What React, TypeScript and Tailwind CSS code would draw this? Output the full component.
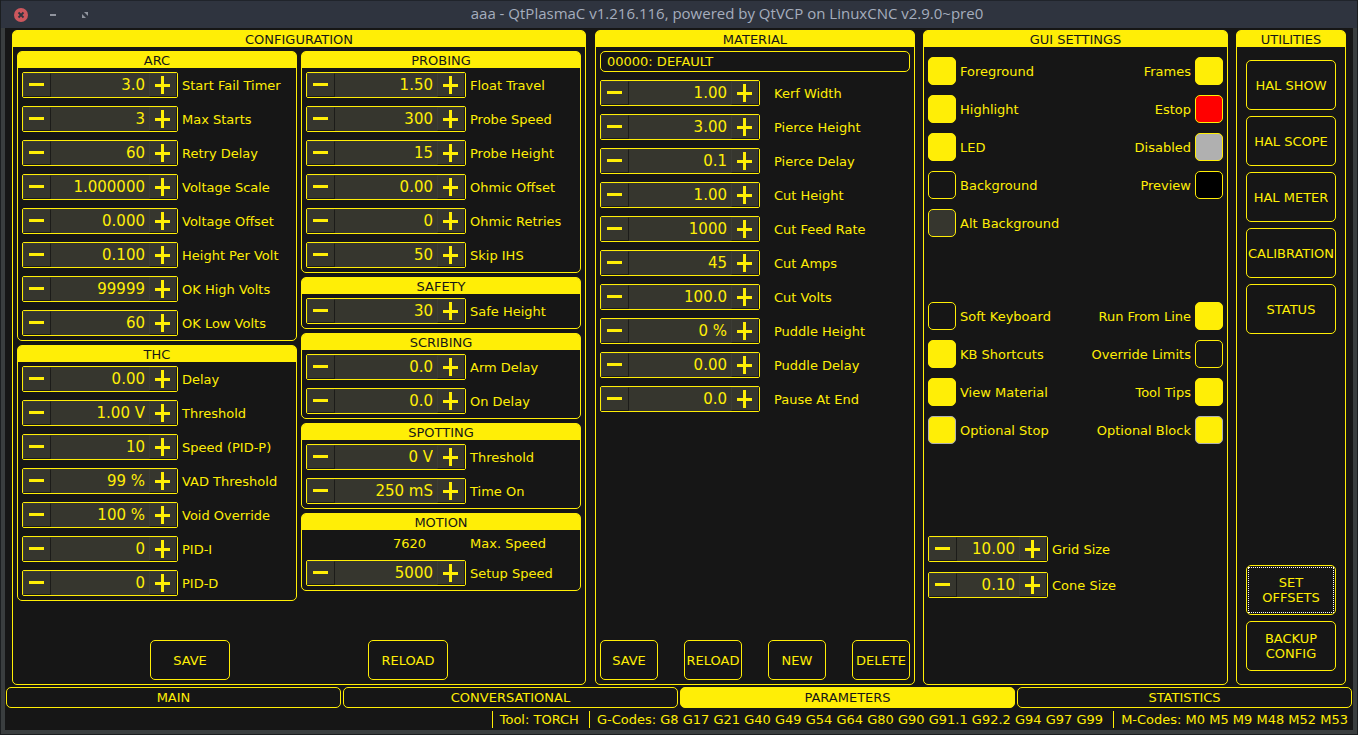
import React, { useId, useState } from "react";

type Field = [label: string, value: string];

const arc: Field[] = [
  ["Start Fail Timer", "3.0"],
  ["Max Starts", "3"],
  ["Retry Delay", "60"],
  ["Voltage Scale", "1.000000"],
  ["Voltage Offset", "0.000"],
  ["Height Per Volt", "0.100"],
  ["OK High Volts", "99999"],
  ["OK Low Volts", "60"],
];
const thc: Field[] = [
  ["Delay", "0.00"],
  ["Threshold", "1.00 V"],
  ["Speed (PID-P)", "10"],
  ["VAD Threshold", "99 %"],
  ["Void Override", "100 %"],
  ["PID-I", "0"],
  ["PID-D", "0"],
];
const probing: Field[] = [
  ["Float Travel", "1.50"],
  ["Probe Speed", "300"],
  ["Probe Height", "15"],
  ["Ohmic Offset", "0.00"],
  ["Ohmic Retries", "0"],
  ["Skip IHS", "50"],
];
const safety: Field[] = [["Safe Height", "30"]];
const scribing: Field[] = [
  ["Arm Delay", "0.0"],
  ["On Delay", "0.0"],
];
const spotting: Field[] = [
  ["Threshold", "0 V"],
  ["Time On", "250 mS"],
];
const material: Field[] = [
  ["Kerf Width", "1.00"],
  ["Pierce Height", "3.00"],
  ["Pierce Delay", "0.1"],
  ["Cut Height", "1.00"],
  ["Cut Feed Rate", "1000"],
  ["Cut Amps", "45"],
  ["Cut Volts", "100.0"],
  ["Puddle Height", "0 %"],
  ["Puddle Delay", "0.00"],
  ["Pause At End", "0.0"],
];

function step(text: string, direction: number) {
  const match = text.match(/^(-?\d+)(?:\.(\d+))?(.*)$/);
  if (!match) return text;
  const places = match[2]?.length ?? 0;
  const next = Math.max(0, parseFloat(text) + direction * Math.pow(10, -places));
  return next.toFixed(places) + match[3];
}

function Spin({
  label,
  value: initial,
  width = "w-40",
  gap = "gap-1",
}: {
  label: string;
  value: string;
  width?: string;
  gap?: string;
}) {
  const id = useId();
  const [value, setValue] = useState(initial);
  const button =
    "flex shrink-0 items-center border border-[#3c3c35] border-r-[#1c1c19] border-b-[#1c1c19] bg-[#36362e]";
  return (
    <div className={`flex items-center ${gap}`}>
      <div className={`flex h-[26px] shrink-0 rounded-xs border border-[#ffee06] bg-[#36362e] ${width}`}>
        <button
          type="button"
          aria-label={`Decrease ${label}`}
          onClick={() => setValue(step(value, -1))}
          className={`${button} w-7 pl-[5px]`}
        >
          <svg width="15" height="18" viewBox="0 0 15 18" fill="#ffee06" shapeRendering="crispEdges">
            <rect x="0" y="7" width="15" height="3" />
          </svg>
        </button>
        <input
          id={id}
          value={value}
          onChange={(e) => setValue(e.target.value)}
          className="h-6 w-0 min-w-0 grow bg-transparent pr-1 text-right text-[15px] outline-none"
        />
        <button
          type="button"
          aria-label={`Increase ${label}`}
          onClick={() => setValue(step(value, 1))}
          className={`${button} w-7 pl-[5px]`}
        >
          <svg width="15" height="18" viewBox="0 0 15 18" fill="#ffee06" shapeRendering="crispEdges">
            <rect x="0" y="8" width="15" height="3" />
            <rect x="6" y="0" width="3" height="18" />
          </svg>
        </button>
      </div>
      <label htmlFor={id} className="whitespace-nowrap">
        {label}
      </label>
    </div>
  );
}

function Panel({ title, children, className = "" }: { title: string; children: React.ReactNode; className?: string }) {
  return (
    <section className={`flex flex-col rounded-[5px] border border-[#ffee06] ${className}`}>
      <h2 className="h-4 shrink-0 rounded-t-[3px] bg-[#ffee06] text-center leading-[18px] text-[#161616]">{title}</h2>
      {children}
    </section>
  );
}

function Group({
  title,
  fields,
  width,
  children,
}: {
  title: string;
  fields: Field[];
  width?: string;
  children?: React.ReactNode;
}) {
  return (
    <Panel title={title}>
      <div className="flex flex-col gap-2 p-1">
        {children}
        {fields.map(([label, value]) => (
          <Spin key={label} label={label} value={value} width={width} />
        ))}
      </div>
    </Panel>
  );
}

function Button({ children, className }: { children: React.ReactNode; className: string }) {
  return (
    <button
      type="button"
      className={`flex items-center justify-center rounded-[5px] border border-[#ffee06] text-center whitespace-nowrap ${className}`}
    >
      {children}
    </button>
  );
}

function Swatch({ label, color, right = false }: { label: string; color: string; right?: boolean }) {
  const id = useId();
  return (
    <div className={`flex items-center gap-1 ${right ? "flex-row-reverse" : ""}`}>
      <button id={id} type="button" className={`size-7 rounded-[5px] border border-[#ffee06] ${color}`} />
      <label htmlFor={id}>{label}</label>
    </div>
  );
}

function Check({
  label,
  checked = false,
  right = false,
  border = "border-[#ffee06]",
}: {
  label: string;
  checked?: boolean;
  right?: boolean;
  border?: string;
}) {
  const id = useId();
  return (
    <div className={`flex items-center gap-1 ${right ? "flex-row-reverse" : ""}`}>
      <input
        id={id}
        type="checkbox"
        defaultChecked={checked}
        className={`size-7 appearance-none rounded-[5px] border checked:bg-[#ffee06] ${border}`}
      />
      <label htmlFor={id}>{label}</label>
    </div>
  );
}

export default function App() {
  const [tab, setTab] = useState("PARAMETERS");
  return (
    <div className="flex min-h-screen flex-col border border-t-0 border-[#1b1e20] bg-[#3a3e3f] font-['DejaVu_Sans',sans-serif] text-[13px] leading-[15px] text-[#ffee06]">
      <header className="flex h-7 shrink-0 items-center border-t border-[#20242b] bg-[#2f343f]">
        <div className="flex w-24 shrink-0 items-center pl-[13px]">
          <button type="button" aria-label="Close">
            <svg width="14" height="14" viewBox="0 0 14 14">
              <circle cx="7" cy="7" r="7" fill="#cc575d" />
              <path d="M4.5 4.5l5 5M9.5 4.5l-5 5" stroke="#2f343f" strokeWidth="1.8" />
            </svg>
          </button>
          <button type="button" aria-label="Minimize" className="ml-[22px]">
            <svg width="6" height="14" viewBox="0 0 6 14">
              <rect y="6" width="6" height="2" fill="#90949e" />
            </svg>
          </button>
          <button type="button" aria-label="Maximize" className="ml-[26px]">
            <svg width="6" height="14" viewBox="0 0 6 14" fill="#90949e">
              <path d="M2 4h4v4zM0 6l4 4H0z" />
            </svg>
          </button>
        </div>
        <h1 className="grow pb-0.5 text-center font-['Open_Sans',sans-serif] text-[15px] text-[#a5adbd]">
          aaa - QtPlasmaC v1.216.116, powered by QtVCP on LinuxCNC v2.9.0~pre0
        </h1>
      </header>

      <div className="mx-1 mb-1 flex grow flex-col bg-[#161616] px-px pt-0.5">
        <main className="grid grow grid-cols-[575fr_320fr_305fr_110fr] gap-2 px-1.5">
          <Panel title="CONFIGURATION" className="mr-px">
            <div className="flex grow flex-col justify-between p-1">
              <div className="grid grid-cols-2 items-start gap-1">
                <div className="flex flex-col gap-1">
                  <Group title="ARC" fields={arc} width="w-39" />
                  <Group title="THC" fields={thc} width="w-39" />
                </div>
                <div className="flex flex-col gap-1">
                  <Group title="PROBING" fields={probing} />
                  <Group title="SAFETY" fields={safety} />
                  <Group title="SCRIBING" fields={scribing} />
                  <Group title="SPOTTING" fields={spotting} />
                  <Group title="MOTION" fields={[["Setup Speed", "5000"]]}>
                    <div className="flex h-[18px] items-center gap-1">
                      <output id="max-speed" className="w-40 pr-10 text-right">
                        7620
                      </output>
                      <label htmlFor="max-speed">Max. Speed</label>
                    </div>
                  </Group>
                </div>
              </div>
              <div className="flex justify-center gap-[138px]">
                <Button className="h-10 w-20">SAVE</Button>
                <Button className="h-10 w-20">RELOAD</Button>
              </div>
            </div>
          </Panel>

          <Panel title="MATERIAL">
            <div className="flex grow flex-col justify-between p-1">
              <div className="flex flex-col gap-2">
                <select
                  aria-label="Material"
                  className="h-[21px] w-full appearance-none rounded-[5px] border border-[#ffee06] bg-[#161616] px-1.5 leading-[15px]"
                >
                  <option>00000: DEFAULT</option>
                </select>
                {material.map(([label, value]) => (
                  <Spin key={label} label={label} value={value} gap="gap-3.5" />
                ))}
              </div>
              <div className="flex justify-between">
                <Button className="h-10 w-[58px]">SAVE</Button>
                <Button className="h-10 w-[58px]">RELOAD</Button>
                <Button className="h-10 w-[58px]">NEW</Button>
                <Button className="h-10 w-[58px]">DELETE</Button>
              </div>
            </div>
          </Panel>

          <Panel title="GUI SETTINGS">
            <div className="px-1 pt-2.5">
              <div className="flex justify-between">
                <div className="flex flex-col gap-2.5">
                  <Swatch label="Foreground" color="bg-[#ffee06]" />
                  <Swatch label="Highlight" color="bg-[#ffee06]" />
                  <Swatch label="LED" color="bg-[#ffee06]" />
                  <Swatch label="Background" color="bg-[#161616]" />
                  <Swatch label="Alt Background" color="bg-[#36362e]" />
                </div>
                <div className="flex flex-col gap-2.5">
                  <Swatch right label="Frames" color="bg-[#ffee06]" />
                  <Swatch right label="Estop" color="bg-[#ff0000]" />
                  <Swatch right label="Disabled" color="bg-[#b0b0b0]" />
                  <Swatch right label="Preview" color="bg-black" />
                </div>
              </div>
              <div className="mt-[65px] flex justify-between">
                <div className="flex flex-col gap-2.5">
                  <Check label="Soft Keyboard" />
                  <Check label="KB Shortcuts" checked />
                  <Check label="View Material" checked />
                  <Check label="Optional Stop" checked border="border-[#b0b0b0]" />
                </div>
                <div className="flex flex-col gap-2.5">
                  <Check right label="Run From Line" checked />
                  <Check right label="Override Limits" />
                  <Check right label="Tool Tips" checked />
                  <Check right label="Optional Block" checked border="border-[#b0b0b0]" />
                </div>
              </div>
              <div className="mt-[92px] flex flex-col gap-2.5">
                <Spin label="Grid Size" value="10.00" width="w-30" />
                <Spin label="Cone Size" value="0.10" width="w-30" />
              </div>
            </div>
          </Panel>

          <Panel title="UTILITIES">
            <div className="flex grow flex-col gap-1.5 px-[9px] py-[13px]">
              <Button className="h-[50px]">HAL SHOW</Button>
              <Button className="h-[50px]">HAL SCOPE</Button>
              <Button className="h-[50px]">HAL METER</Button>
              <Button className="h-[50px]">CALIBRATION</Button>
              <Button className="h-[50px]">STATUS</Button>
              <Button className="mt-auto h-[50px] p-px">
                <span className="flex h-full w-full items-center justify-center border border-dotted border-white">
                  SET
                  <br />
                  OFFSETS
                </span>
              </Button>
              <Button className="h-[50px]">
                BACKUP
                <br />
                CONFIG
              </Button>
            </div>
          </Panel>
        </main>

        <nav className="mt-0.5 grid grid-cols-4 gap-0.5">
          {["MAIN", "CONVERSATIONAL", "PARAMETERS", "STATISTICS"].map((name) => (
            <button
              key={name}
              type="button"
              onClick={() => setTab(name)}
              aria-pressed={tab === name}
              className={`h-[21px] rounded-[5px] border border-[#ffee06] ${
                tab === name ? "bg-[#ffee06] text-[#161616]" : ""
              }`}
            >
              {name}
            </button>
          ))}
        </nav>

        <footer className="flex h-[22px] items-center justify-end pr-1">
          <span className="border-l border-[#ffee06] py-px pr-2.5 pl-[7px]">Tool: TORCH</span>
          <span className="border-l border-[#ffee06] py-px pr-2.5 pl-[7px]">
            G-Codes: G8 G17 G21 G40 G49 G54 G64 G80 G90 G91.1 G92.2 G94 G97 G99
          </span>
          <span className="border-l border-[#ffee06] py-px pl-[7px]">M-Codes: M0 M5 M9 M48 M52 M53</span>
        </footer>
      </div>
    </div>
  );
}
